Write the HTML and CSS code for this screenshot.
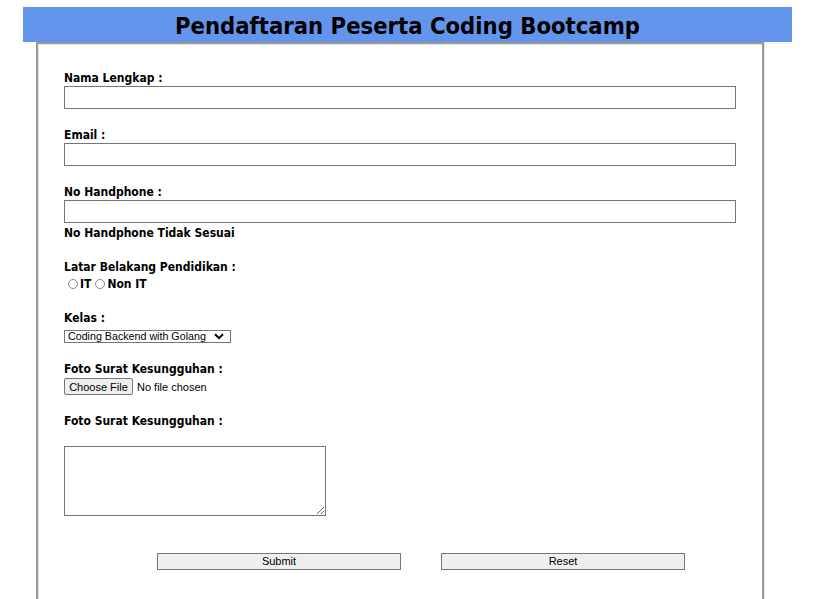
FILE: index.html
```html
<!DOCTYPE html>
<html>
<head>
<meta charset="utf-8">
<link rel="stylesheet" href="styles.css">
</head>
<body>
<h1 class="title">Pendaftaran Peserta Coding Bootcamp</h1>
<div class="card">
  <div class="field f1">
    <label class="lbl">Nama Lengkap :</label>
    <input class="txt" type="text">
  </div>
  <div class="field">
    <label class="lbl">Email :</label>
    <input class="txt" type="text">
  </div>
  <div class="field">
    <label class="lbl">No Handphone :</label>
    <input class="txt" type="text">
    <div class="lbl err">No Handphone Tidak Sesuai</div>
  </div>
  <div class="field">
    <label class="lbl">Latar Belakang Pendidikan :</label>
    <div class="radios">
      <span class="radio"></span><span class="lbl">IT</span>
      <span class="radio"></span><span class="lbl">Non IT</span>
    </div>
  </div>
  <div class="field">
    <label class="lbl">Kelas :</label>
    <div class="select">
      <span>Coding Backend with Golang</span>
      <svg class="chev" width="10" height="7" viewBox="0 0 10 7"><path d="M1 1.2 L5 5 L9 1.2" fill="none" stroke="#000" stroke-width="2"/></svg>
    </div>
  </div>
  <div class="field">
    <label class="lbl">Foto Surat Kesungguhan :</label>
    <div class="file">
      <button class="choose" type="button">Choose File</button>
      <span class="nofile">No file chosen</span>
    </div>
  </div>
  <div class="field">
    <label class="lbl">Foto Surat Kesungguhan :</label>
    <textarea class="area"></textarea>
  </div>
  <div class="actions">
    <button class="btn" type="button">Submit</button>
    <button class="btn" type="button">Reset</button>
  </div>
</div>
</body>
</html>
```
FILE: styles.css
```css
html, body {
  margin: 0;
  padding: 0;
  background: #fff;
  overflow: hidden;
  height: 599px;
}
body {
  padding: 7px 0 0 23px;
  box-sizing: border-box;
  font-family: "DejaVu Sans Condensed", "DejaVu Sans", sans-serif;
  color: #000;
}
.title {
  margin: 0;
  width: 769px;
  height: 35px;
  background: #6495ed;
  text-align: center;
  font-size: 23.6px;
  font-weight: bold;
  line-height: 39px;
  overflow: hidden;
}
.card {
  margin-left: 13px;
  height: 530px;
  border: 2px solid #9a9a9a;
  border-bottom: none;
  box-shadow: inset 1px 1px 0 #e2e2e2, 1px 0 0 #e2e2e2;
  padding: 27px 26px 0 26px;
  box-sizing: content-box;
  width: 672px;
}
.field {
  display: flex;
  flex-direction: column;
  align-items: flex-start;
  margin-bottom: 18px;
}
.lbl {
  font-size: 12px;
  font-weight: bold;
  line-height: 16px;
  height: 16px;
}
.f1 .lbl {
  height: 15px;
  line-height: 15px;
}
.txt {
  margin: 0;
  box-sizing: border-box;
  width: 672px;
  height: 23px;
  border: 1px solid #767676;
  padding: 1px 2px;
  font-family: "Liberation Sans", Arial, sans-serif;
}
.err {
  margin-top: 2px;
}
.radios {
  display: flex;
  align-items: center;
  height: 16px;
  margin-left: 4px;
  margin-top: 1px;
}
.radio {
  width: 8px;
  height: 8px;
  border: 1px solid #8a8a8a;
  border-radius: 50%;
  margin-right: 2px;
  margin-left: 0;
}
.radios .lbl + .radio {
  margin-left: 4px;
}
.select {
  margin-top: 4px;
  box-sizing: border-box;
  width: 167px;
  height: 13px;
  border: 1px solid #767676;
  display: flex;
  align-items: center;
  justify-content: space-between;
  padding: 0 6px 0 3px;
  font-family: "Liberation Sans", Arial, sans-serif;
  font-size: 10.7px;
  line-height: 11px;
}
.chev {
  display: block;
}
.file {
  display: flex;
  align-items: center;
  margin-top: 1px;
  font-family: "Liberation Sans", Arial, sans-serif;
  font-size: 11px;
}
.choose {
  margin: 0 4px 0 0;
  box-sizing: border-box;
  width: 69px;
  height: 17px;
  padding: 0;
  border: 1px solid #767676;
  border-radius: 2px;
  background: #efefef;
  font-family: "Liberation Sans", Arial, sans-serif;
  font-size: 11px;
  color: #000;
}
.area {
  margin: 17px 0 0 0;
  box-sizing: border-box;
  width: 262px;
  height: 70px;
  border: 1px solid #767676;
  padding: 2px;
  display: block;
}
.actions {
  display: flex;
  gap: 40px;
  margin-left: 93px;
  margin-top: 37px;
}
.btn {
  margin: 0;
  box-sizing: border-box;
  width: 244px;
  height: 17px;
  padding: 0;
  border: 1px solid #767676;
  background: #efefef;
  font-family: "Liberation Sans", Arial, sans-serif;
  font-size: 11px;
  line-height: 15px;
  color: #000;
}
```
